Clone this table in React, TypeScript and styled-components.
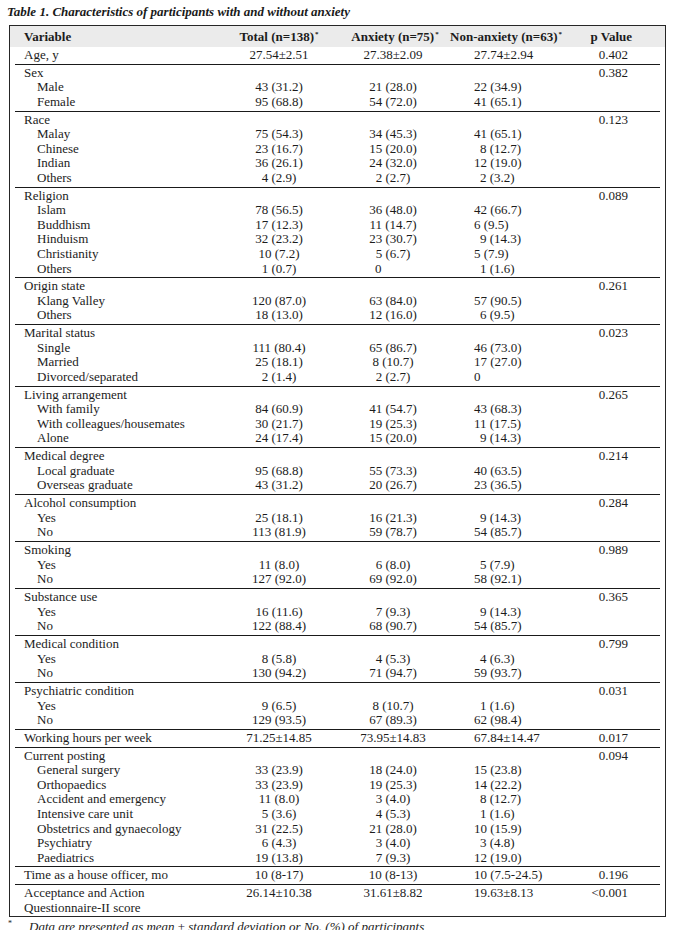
import React from "react";
import styled, { createGlobalStyle } from "styled-components";

const GlobalStyle = createGlobalStyle`
  html, body { margin: 0; padding: 0; background: #ffffff; }
  body { font-family: "Liberation Serif", "Times New Roman", serif; color: #1c1c1c; }
`;

const COLS = "205px 118px 110px 116px 96px";

const Page = styled.div`
  width: 675px;
  padding: 3px 0 0 0;
  box-sizing: border-box;
`;

const Caption = styled.div`
  font-style: italic;
  font-weight: bold;
  font-size: 13px;
  line-height: 18px;
  height: 22px;
  padding-left: 7px;
  color: #1a1a1a;
`;

const TableBox = styled.div`
  margin-left: 9px;
  width: 657px;
  box-sizing: border-box;
  border: 1px solid #262626;
`;

const HeaderRow = styled.div`
  display: grid;
  grid-template-columns: ${COLS};
  align-items: center;
  height: 21px;
  padding: 0 5px;
  background: #ebebeb;
  font-weight: bold;
  font-size: 13px;
`;

const HeadCell = styled.div<{ $align?: string; $pl?: number; $pr?: number }>`
  text-align: ${(p) => p.$align || "center"};
  padding-left: ${(p) => p.$pl || 0}px;
  padding-right: ${(p) => p.$pr || 0}px;
  white-space: nowrap;
`;

const Sup = styled.sup`
  font-size: 7px;
  line-height: 0;
  vertical-align: 5px;
  margin-left: 1px;
`;

const Body = styled.div`
  padding: 0 5px;
`;

const Group = styled.div<{ $last?: boolean }>`
  padding: 1px 0 ${(p) => (p.$last ? 1 : 1.3)}px;
  border-bottom: ${(p) => (p.$last ? "none" : "1px solid #1a1a1a")};
`;

const Line = styled.div`
  display: grid;
  grid-template-columns: ${COLS};
  font-size: 13px;
  line-height: 14.55px;
  white-space: nowrap;
`;

const LabelCell = styled.div<{ $indent?: boolean }>`
  padding-left: ${(p) => (p.$indent ? 22 : 9)}px;
`;

const ValueCell = styled.div<{ $align: string; $pl?: number; $pr?: number }>`
  text-align: ${(p) => p.$align};
  padding-left: ${(p) => p.$pl || 0}px;
  padding-right: ${(p) => p.$pr || 0}px;
`;

const Gap = styled.span`
  display: inline-block;
  width: 6px;
`;

const Footnote = styled.div`
  display: flex;
  align-items: flex-start;
  margin-top: 2px;
  padding-left: 8px;
  font-size: 13px;
  line-height: 16px;
`;

const FootMark = styled.span`
  width: 21px;
  font-size: 8px;
  line-height: 10px;
`;

const FootText = styled.span`
  font-style: italic;
`;

type Row = [string, string, string, string, string?];
type Section = { label: string; p?: string; vals?: [string, string, string]; items?: Row[]; extra?: string };

const sections: Section[] = [
  { label: "Age, y", vals: ["27.54±2.51", "27.38±2.09", "27.74±2.94"], p: "0.402" },
  {
    label: "Sex",
    p: "0.382",
    items: [
      ["Male", "43 (31.2)", "21 (28.0)", "22 (34.9)"],
      ["Female", "95 (68.8)", "54 (72.0)", "41 (65.1)"],
    ],
  },
  {
    label: "Race",
    p: "0.123",
    items: [
      ["Malay", "75 (54.3)", "34 (45.3)", "41 (65.1)"],
      ["Chinese", "23 (16.7)", "15 (20.0)", "_8 (12.7)"],
      ["Indian", "36 (26.1)", "24 (32.0)", "12 (19.0)"],
      ["Others", "4 (2.9)", "2 (2.7)", "_2 (3.2)"],
    ],
  },
  {
    label: "Religion",
    p: "0.089",
    items: [
      ["Islam", "78 (56.5)", "36 (48.0)", "42 (66.7)"],
      ["Buddhism", "17 (12.3)", "11 (14.7)", "6 (9.5)"],
      ["Hinduism", "32 (23.2)", "23 (30.7)", "_9 (14.3)"],
      ["Christianity", "10 (7.2)", "5 (6.7)", "5 (7.9)"],
      ["Others", "1 (0.7)", "0 ", "_1 (1.6)"],
    ],
  },
  {
    label: "Origin state",
    p: "0.261",
    items: [
      ["Klang Valley", "120 (87.0)", "63 (84.0)", "57 (90.5)"],
      ["Others", "18 (13.0)", "12 (16.0)", "_6 (9.5)"],
    ],
  },
  {
    label: "Marital status",
    p: "0.023",
    items: [
      ["Single", "111 (80.4)", "65 (86.7)", "46 (73.0)"],
      ["Married", "25 (18.1)", "8 (10.7)", "17 (27.0)"],
      ["Divorced/separated", "2 (1.4)", "2 (2.7)", "0"],
    ],
  },
  {
    label: "Living arrangement",
    p: "0.265",
    items: [
      ["With family", "84 (60.9)", "41 (54.7)", "43 (68.3)"],
      ["With colleagues/housemates", "30 (21.7)", "19 (25.3)", "11 (17.5)"],
      ["Alone", "24 (17.4)", "15 (20.0)", "_9 (14.3)"],
    ],
  },
  {
    label: "Medical degree",
    p: "0.214",
    items: [
      ["Local graduate", "95 (68.8)", "55 (73.3)", "40 (63.5)"],
      ["Overseas graduate", "43 (31.2)", "20 (26.7)", "23 (36.5)"],
    ],
  },
  {
    label: "Alcohol consumption",
    p: "0.284",
    items: [
      ["Yes", "25 (18.1)", "16 (21.3)", "_9 (14.3)"],
      ["No", "113 (81.9)", "59 (78.7)", "54 (85.7)"],
    ],
  },
  {
    label: "Smoking",
    p: "0.989",
    items: [
      ["Yes", "11 (8.0)", "6 (8.0)", "_5 (7.9)"],
      ["No", "127 (92.0)", "69 (92.0)", "58 (92.1)"],
    ],
  },
  {
    label: "Substance use",
    p: "0.365",
    items: [
      ["Yes", "16 (11.6)", "7 (9.3)", "_9 (14.3)"],
      ["No", "122 (88.4)", "68 (90.7)", "54 (85.7)"],
    ],
  },
  {
    label: "Medical condition",
    p: "0.799",
    items: [
      ["Yes", "8 (5.8)", "4 (5.3)", "_4 (6.3)"],
      ["No", "130 (94.2)", "71 (94.7)", "59 (93.7)"],
    ],
  },
  {
    label: "Psychiatric condition",
    p: "0.031",
    items: [
      ["Yes", "9 (6.5)", "8 (10.7)", "_1 (1.6)"],
      ["No", "129 (93.5)", "67 (89.3)", "62 (98.4)"],
    ],
  },
  { label: "Working hours per week", vals: ["71.25±14.85", "73.95±14.83", "67.84±14.47"], p: "0.017" },
  {
    label: "Current posting",
    p: "0.094",
    items: [
      ["General surgery", "33 (23.9)", "18 (24.0)", "15 (23.8)"],
      ["Orthopaedics", "33 (23.9)", "19 (25.3)", "14 (22.2)"],
      ["Accident and emergency", "11 (8.0)", "3 (4.0)", "_8 (12.7)"],
      ["Intensive care unit", "5 (3.6)", "4 (5.3)", "_1 (1.6)"],
      ["Obstetrics and gynaecology", "31 (22.5)", "21 (28.0)", "10 (15.9)"],
      ["Psychiatry", "6 (4.3)", "3 (4.0)", "_3 (4.8)"],
      ["Paediatrics", "19 (13.8)", "7 (9.3)", "12 (19.0)"],
    ],
  },
  { label: "Time as a house officer, mo", vals: ["10 (8-17)", "10 (8-13)", "10 (7.5-24.5)"], p: "0.196" },
  {
    label: "Acceptance and Action",
    vals: ["26.14±10.38", "31.61±8.82", "19.63±8.13"],
    p: "<0.001",
    extra: "Questionnaire-II score",
  },
];

const NonAnx: React.FC<{ v: string }> = ({ v }) =>
  v.startsWith("_") ? (
    <>
      <Gap />
      {v.slice(1)}
    </>
  ) : (
    <>{v}</>
  );

const Values: React.FC<{ vals?: [string, string, string]; p?: string }> = ({ vals, p }) => {
  const lone = vals && vals[1].trim() === "0";
  return (
    <>
      <ValueCell $align="center">{vals ? vals[0] : ""}</ValueCell>
      <ValueCell $align={lone ? "left" : "center"} $pl={lone ? 37 : 0}>
        {vals ? vals[1].trim() : ""}
      </ValueCell>
      <ValueCell $align="left" $pl={26}>
        {vals ? <NonAnx v={vals[2]} /> : ""}
      </ValueCell>
      <ValueCell $align="right" $pr={32}>
        {p || ""}
      </ValueCell>
    </>
  );
};

export default function App() {
  return (
    <Page>
      <GlobalStyle />
      <Caption>Table 1. Characteristics of participants with and without anxiety</Caption>
      <TableBox>
        <HeaderRow>
          <HeadCell $align="left" $pl={9}>
            Variable
          </HeadCell>
          <HeadCell>
            Total (n=138)<Sup>*</Sup>
          </HeadCell>
          <HeadCell $pl={4}>
            Anxiety (n=75)<Sup>*</Sup>
          </HeadCell>
          <HeadCell>
            Non-anxiety (n=63)<Sup>*</Sup>
          </HeadCell>
          <HeadCell $align="right" $pr={28}>
            p Value
          </HeadCell>
        </HeaderRow>
        <Body>
          {sections.map((s, i) => (
            <Group key={s.label} $last={i === sections.length - 1}>
              <Line>
                <LabelCell>{s.label}</LabelCell>
                <Values vals={s.vals} p={s.p} />
              </Line>
              {s.items?.map((r) => (
                <Line key={r[0]}>
                  <LabelCell $indent>{r[0]}</LabelCell>
                  <Values vals={[r[1], r[2], r[3]]} />
                </Line>
              ))}
              {s.extra && (
                <Line>
                  <LabelCell>{s.extra}</LabelCell>
                </Line>
              )}
            </Group>
          ))}
        </Body>
      </TableBox>
      <Footnote>
        <FootMark>*</FootMark>
        <FootText>Data are presented as mean ± standard deviation or No. (%) of participants</FootText>
      </Footnote>
    </Page>
  );
}
